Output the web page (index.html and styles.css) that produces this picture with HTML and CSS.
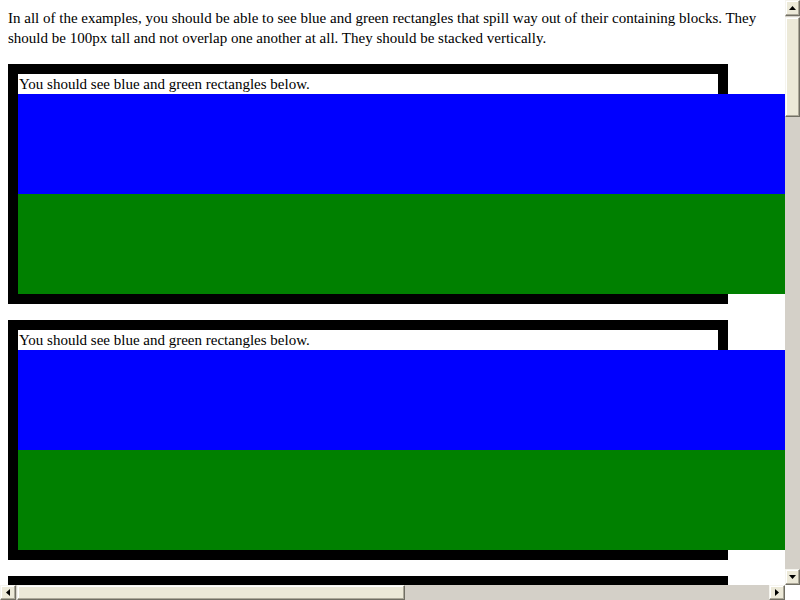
FILE: index.html
```html
<!DOCTYPE html>
<html>
<head>
<meta charset="utf-8">
<link rel="stylesheet" href="styles.css">
</head>
<body>
<p class="intro">In all of the examples, you should be able to see blue and green rectangles that spill way out of their containing blocks. They should be 100px tall and not overlap one another at all. They should be stacked vertically.</p>
<div class="box">
  <div class="label">You should see blue and green rectangles below.</div>
  <div class="rect blue"></div>
  <div class="rect green"></div>
</div>
<div class="box">
  <div class="label">You should see blue and green rectangles below.</div>
  <div class="rect blue"></div>
  <div class="rect green"></div>
</div>
<div class="box">
  <div class="label">You should see blue and green rectangles below.</div>
  <div class="rect blue"></div>
  <div class="rect green"></div>
</div>

<div class="vscroll">
  <div class="btn"><svg width="7" height="4" viewBox="0 0 7 4"><path d="M3.5 0 L7 4 L0 4 Z" fill="#000"/></svg></div>
  <div class="thumb vthumb"></div>
  <div class="track"></div>
  <div class="btn"><svg width="7" height="4" viewBox="0 0 7 4"><path d="M0 0 L7 0 L3.5 4 Z" fill="#000"/></svg></div>
</div>
<div class="hscroll">
  <div class="btn"><svg width="4" height="7" viewBox="0 0 4 7"><path d="M4 0 L4 7 L0 3.5 Z" fill="#000"/></svg></div>
  <div class="thumb hthumb"></div>
  <div class="track"></div>
  <div class="btn"><svg width="4" height="7" viewBox="0 0 4 7"><path d="M0 0 L4 3.5 L0 7 Z" fill="#000"/></svg></div>
</div>
<div class="corner"></div>
</body>
</html>
```

FILE: styles.css
```css
html, body {
  overflow: hidden;
}
body {
  margin: 8px;
  background: #fff;
  color: #000;
  font-family: "Liberation Serif", "Times New Roman", serif;
  font-size: 15px;
  line-height: 20px;
}
.intro {
  margin: 0 0 16px 0;
  width: 769px;
}
.box {
  width: 700px;
  border: 10px solid #000;
  background: #fff;
  margin-bottom: 16px;
}
.label {
  height: 20px;
  padding-left: 1px;
}
.rect {
  width: 1500px;
  height: 100px;
}
.blue { background: #0000ff; }
.green { background: #008000; }

.vscroll {
  position: fixed;
  top: 0;
  right: 0;
  width: 15px;
  height: 585px;
  background: #d4d0c8;
  display: flex;
  flex-direction: column;
}
.hscroll {
  position: fixed;
  left: 0;
  bottom: 0;
  width: 785px;
  height: 15px;
  background: #d4d0c8;
  display: flex;
  flex-direction: row;
}
.corner {
  position: fixed;
  right: 0;
  bottom: 0;
  width: 15px;
  height: 15px;
  background: #fff;
}
.btn, .thumb {
  box-sizing: border-box;
  background: #ece9d8;
  border-top: 1px solid #f5f4ee;
  border-left: 1px solid #f5f4ee;
  border-right: 1px solid #716f64;
  border-bottom: 1px solid #716f64;
  box-shadow: inset -1px -1px 0 #aca899, inset 1px 1px 0 #fff;
  display: flex;
  align-items: center;
  justify-content: center;
  flex: none;
}
.vscroll .btn {
  width: 15px;
  height: 16px;
}
.vscroll .btn:first-child { margin-bottom: 1px; }
.vthumb {
  width: 15px;
  height: 100px;
}
.hscroll .btn {
  width: 16px;
  height: 15px;
}
.hscroll .btn:first-child { margin-right: 1px; }
.hthumb {
  width: 388px;
  height: 15px;
}
.track {
  flex: 1;
}
```
